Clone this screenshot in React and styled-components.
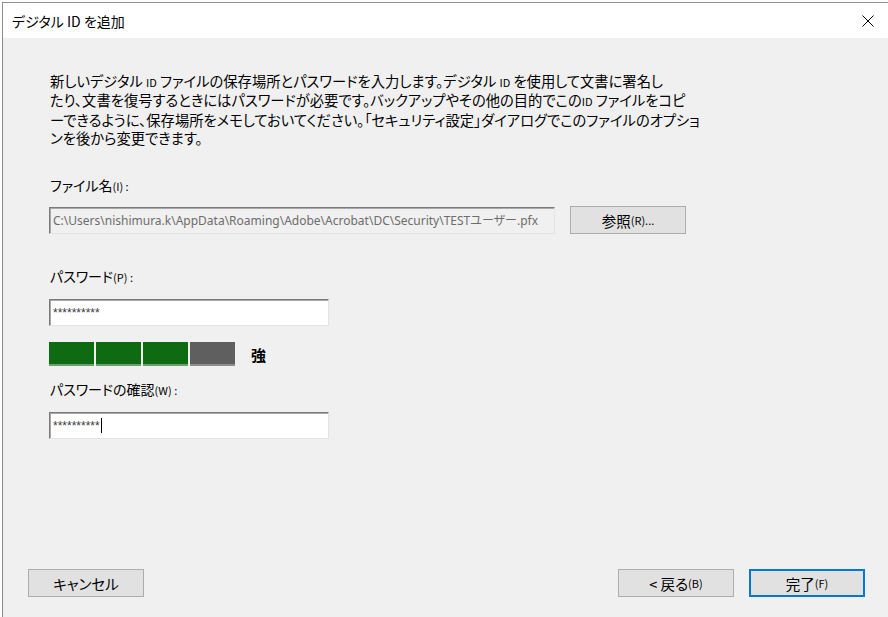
import React from 'react';
import styled, {createGlobalStyle} from 'styled-components';

const GlobalStyle = createGlobalStyle`
  html, body {
    margin: 0;
    padding: 0;
    background: #fdfdfd;
  }
  body {
    font-family: "Noto Sans CJK JP", "Noto Sans", sans-serif;
    font-feature-settings: "palt";
    color: #000;
  }
`

const Page = styled.div`
  padding: 2px 0 0 2px;
  height: 617px;
  box-sizing: border-box;
`

const Window = styled.div`
  height: 100%;
  display: flex;
  flex-direction: column;
  border-top: 1px solid #8c8c8c;
  border-left: 1px solid #8c8c8c;
  background: #f0f0f0;
`

const TitleBar = styled.div`
  height: 35px;
  flex-shrink: 0;
  background: #fff;
  display: flex;
  align-items: center;
  justify-content: space-between;
  padding: 0 14px 0 9px;
  font-size: 14px;
`

const CloseIcon = () => (
  <svg width="12" height="12" viewBox="0 0 12 12">
    <path d="M0.5 0.5 L11.5 11.5 M11.5 0.5 L0.5 11.5" stroke="#000" strokeWidth="1" fill="none"/>
  </svg>
)

const Body = styled.div`
  flex: 1;
  display: flex;
  flex-direction: column;
  padding: 34px 0 0 46px;
`

const Description = styled.p`
  margin: 0 0 0 1px;
  font-size: 14.3px;
  line-height: 18.3px;
`

const Small = styled.span`
  font-size: 11px;
`

const Label = styled.div`
  margin: ${p => p.top}px 0 0 1px;
  font-size: 14px;
  line-height: 18px;
`

const FieldRow = styled.div`
  display: flex;
  align-items: center;
  gap: 15px;
  margin-top: ${p => p.top}px;
`

const TextBox = styled.div`
  width: ${p => p.width}px;
  height: 27px;
  box-sizing: border-box;
  border: 1px solid;
  border-color: #7a7a7a #e3e3e3 #e3e3e3 #7a7a7a;
  box-shadow: inset 1px 1px 0 #a9a9a9;
  background: ${p => (p.disabled ? '#f0f0f0' : '#fff')};
  color: ${p => (p.disabled ? '#6d6d6d' : '#3a3a3a')};
  display: flex;
  align-items: center;
  padding-left: 3px;
  font-family: ${p => (p.disabled ? '"Noto Sans", "Noto Sans CJK JP", sans-serif' : '"Liberation Sans", sans-serif')};
  font-size: 12px;
  white-space: nowrap;
  overflow: hidden;
`

const Caret = styled.span`
  display: inline-block;
  width: 1px;
  height: 15px;
  background: #000;
  margin-left: 1px;
`

const Button = styled.div`
  width: 116px;
  height: 28px;
  box-sizing: border-box;
  background: #e1e1e1;
  border: ${p => (p.primary ? '2px solid #0078d7' : '1px solid #adadad')};
  display: flex;
  align-items: center;
  justify-content: center;
  font-size: 14.5px;
`

const StrengthRow = styled.div`
  display: flex;
  align-items: center;
  margin-top: 16px;
  gap: 2px;
`

const Segment = styled.div`
  width: 45px;
  height: 24px;
  background: ${p => (p.on ? '#0e6b12' : '#5f5f5f')};
  box-shadow: inset 0 -2px 0 ${p => (p.on ? '#6d9e6e' : '#8e8e8e')};
`

const StrengthText = styled.span`
  margin-left: 14px;
  font-size: 15px;
  font-weight: 700;
`

const Footer = styled.div`
  flex-shrink: 0;
  display: flex;
  align-items: center;
  padding: 0 23px 21px 25px;
  gap: 15px;
`

const Spacer = styled.div`
  flex: 1;
`

const App = () => (
  <Page>
    <GlobalStyle/>
    <Window>
      <TitleBar>
        <span>デジタル ID を追加</span>
        <CloseIcon/>
      </TitleBar>
      <Body>
        <Description>
          新しいデジタル <Small>ID</Small> ファイルの保存場所とパスワードを入力します。デジタル <Small>ID</Small> を使用して文書に署名し<br/>
          たり、文書を復号するときにはパスワードが必要です。バックアップやその他の目的でこの<Small>ID</Small> ファイルをコピ<br/>
          ーできるように、保存場所をメモしておいてください。「セキュリティ設定」ダイアログでこのファイルのオプショ<br/>
          ンを後から変更できます。
        </Description>
        <Label top={29}>ファイル名<Small>(I) :</Small></Label>
        <FieldRow top={11}>
          <TextBox width={506} disabled>
            C:\Users\nishimura.k\AppData\Roaming\Adobe\Acrobat\DC\Security\TESTユーザー.pfx
          </TextBox>
          <Button>参照<Small>(R)...</Small></Button>
        </FieldRow>
        <Label top={33}>パスワード<Small>(P) :</Small></Label>
        <FieldRow top={13}>
          <TextBox width={280}>**********</TextBox>
        </FieldRow>
        <StrengthRow>
          <Segment on/>
          <Segment on/>
          <Segment on/>
          <Segment/>
          <StrengthText>強</StrengthText>
        </StrengthRow>
        <Label top={14}>パスワードの確認<Small>(W) :</Small></Label>
        <FieldRow top={13}>
          <TextBox width={280}>**********<Caret/></TextBox>
        </FieldRow>
      </Body>
      <Footer>
        <Button>キャンセル</Button>
        <Spacer/>
        <Button>&lt; 戻る<Small>(B)</Small></Button>
        <Button primary>完了<Small>(F)</Small></Button>
      </Footer>
    </Window>
  </Page>
);

export default App;
